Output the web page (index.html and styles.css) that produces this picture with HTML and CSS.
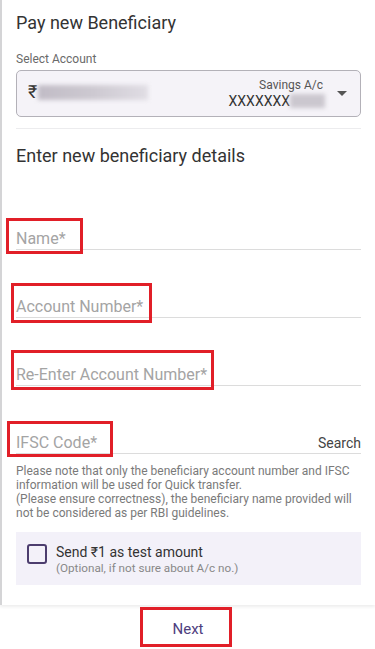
FILE: index.html
```html
<!DOCTYPE html>
<html lang="en">
<head>
<meta charset="utf-8">
<title>Pay new Beneficiary</title>
<link rel="stylesheet" href="styles.css">
</head>
<body>
<div class="card">
  <h1 class="title">Pay new Beneficiary</h1>
  <div class="label">Select Account</div>
  <div class="account">
    <span class="rupee">₹</span>
    <span class="blur blur-bal"></span>
    <div class="acc-right">
      <span class="acc-type">Savings A/c</span>
      <span class="acc-num">XXXXXXX<span class="blur blur-num"></span></span>
    </div>
    <span class="caret"></span>
  </div>
  <div class="divider"></div>
  <h2 class="subtitle">Enter new beneficiary details</h2>

  <div class="field first">
    <span class="ph">Name*<span class="hl hl-name"></span></span>
  </div>
  <div class="field">
    <span class="ph">Account Number*<span class="hl hl-acc"></span></span>
  </div>
  <div class="field">
    <span class="ph">Re-Enter Account Number*<span class="hl hl-re"></span></span>
  </div>
  <div class="field ifsc">
    <span class="ph">IFSC Code*<span class="hl hl-ifsc"></span></span>
    <span class="search">Search</span>
  </div>

  <p class="note">Please note that only the beneficiary account number and IFSC information will be used for Quick transfer.<br>(Please ensure correctness), the beneficiary name provided will not be considered as per RBI guidelines.</p>

  <div class="test">
    <span class="checkbox"></span>
    <div class="test-text">
      <div class="test-main">Send ₹1 as test amount</div>
      <div class="test-sub">(Optional, if not sure about A/c no.)</div>
    </div>
  </div>
</div>
<div class="footer">
  <span class="next">Next<span class="hl hl-next"></span></span>
</div>
</body>
</html>
```

FILE: styles.css
```css
* { box-sizing: border-box; }
html, body { margin: 0; padding: 0; background: #fff; }
body {
  font-family: Roboto, "Noto Sans", "DejaVu Sans", sans-serif;
  color: #333;
  width: 375px;
  height: 649px;
  overflow: hidden;
}
.card {
  height: 605px;
  border-left: 2px solid #d4d4d6;
  padding: 13px 14px 0 14px;
  box-shadow: 0 2px 3px rgba(0,0,0,0.07);
  position: relative;
}
.title {
  margin: 0;
  font-size: 18px;
  line-height: 20px;
  font-weight: 400;
  color: #333;
}
.label {
  margin-top: 19px;
  font-size: 12px;
  line-height: 14px;
  color: #6a6a6a;
}
.account {
  margin-top: 4px;
  height: 47px;
  border: 1px solid #b3b1b8;
  border-radius: 5px;
  background: #f5f3f8;
  display: flex;
  align-items: center;
  padding: 0 13px 0 11px;
}
.rupee {
  font-size: 18px;
  color: #333;
  line-height: 20px;
  margin-top: -3px;
}
.blur {
  display: inline-block;
  filter: blur(2px);
}
.blur-bal {
  width: 110px;
  height: 15px;
  margin-left: 1px;
  margin-top: -2px;
  background: linear-gradient(90deg, #c1bcc6 0%, #cdc9d1 50%, #e0dde4 100%);
}
.acc-right {
  margin-left: auto;
  display: flex;
  flex-direction: column;
  align-items: flex-end;
}
.acc-type {
  font-size: 12px;
  line-height: 15px;
  color: #555;
  margin-right: 2px;
}
.acc-num {
  font-size: 14px;
  line-height: 16px;
  color: #333;
  display: flex;
  align-items: center;
}
.blur-num {
  width: 35px;
  height: 14px;
  background: #cbc7cf;
}
.caret {
  margin-left: 12px;
  width: 0;
  height: 0;
  border-left: 5.5px solid transparent;
  border-right: 5.5px solid transparent;
  border-top: 5px solid #555;
}
.divider {
  margin-top: 11px;
  height: 1px;
  background: #ececee;
}
.subtitle {
  margin: 17px 0 0 0;
  font-size: 18px;
  line-height: 20px;
  font-weight: 400;
  color: #333;
}
.field {
  height: 68px;
  padding-top: 47px;
  border-bottom: 1px solid #dcdcdc;
  font-size: 16px;
  line-height: 20px;
  display: flex;
  align-items: baseline;
}
.field.first { margin-top: 16px; }
.ph {
  color: #a4a4a4;
  position: relative;
}
.search {
  margin-left: auto;
  font-size: 14px;
  color: #444;
}
.hl {
  position: absolute;
  border: 3px solid #e11f28;
  pointer-events: none;
}
.hl-name { left: -10px; right: -17px; top: -11px; bottom: -5px; }
.hl-acc  { left: -5px;  right: -9px;  top: -14px; bottom: -6px; }
.hl-re   { left: -5px;  right: -7px;  top: -15px; bottom: -5px; }
.hl-ifsc { left: -9px;  right: -16px; top: -12px; bottom: -4px; }
.hl-next { left: -32px; right: -28px; top: -12px; bottom: -8px; }
.note {
  margin: 10px 0 0 0;
  font-size: 12px;
  line-height: 14px;
  color: #7a7a7a;
}
.test {
  margin-top: 12px;
  height: 53px;
  background: #f3f1f9;
  display: flex;
  align-items: flex-start;
  padding: 11px 0 0 11px;
}
.checkbox {
  width: 20px;
  height: 20px;
  margin-top: 1px;
  border: 2px solid #4c3d6e;
  border-radius: 3px;
  flex: none;
}
.test-text { margin-left: 9px; }
.test-main {
  font-size: 14px;
  line-height: 18px;
  color: #333;
}
.test-sub {
  font-size: 11.7px;
  line-height: 14px;
  color: #888;
}
.footer {
  height: 44px;
  display: flex;
  justify-content: center;
  padding-top: 14px;
}
.next {
  position: relative;
  font-size: 15px;
  line-height: 20px;
  height: 20px;
  color: #4e3e7e;
  margin-left: 1px;
}
```
